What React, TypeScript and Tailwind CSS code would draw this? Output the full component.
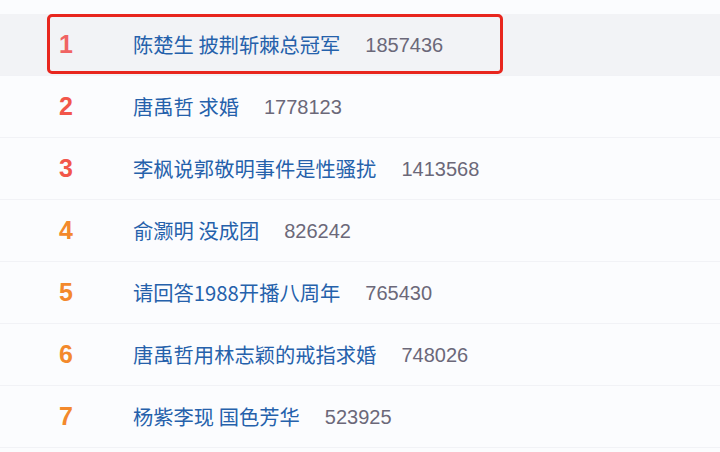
import React from "react";

const rows = [
  { rank: 1, title: "陈楚生 披荆斩棘总冠军", count: "1857436" },
  { rank: 2, title: "唐禹哲 求婚", count: "1778123" },
  { rank: 3, title: "李枫说郭敬明事件是性骚扰", count: "1413568" },
  { rank: 4, title: "俞灏明 没成团", count: "826242" },
  { rank: 5, title: "请回答1988开播八周年", count: "765430" },
  { rank: 6, title: "唐禹哲用林志颖的戒指求婚", count: "748026" },
  { rank: 7, title: "杨紫李现 国色芳华", count: "523925" },
];

export default function App() {
  return (
    <div className="w-[720px] h-[452px] overflow-hidden bg-[#fbfcfe] pt-[14px]">
      {rows.map((r) => {
        const rankColor =
          r.rank === 1
            ? "text-[#f06363]"
            : r.rank <= 3
            ? "text-[#f2564a]"
            : "text-[#f3892c]";
        return (
          <div
            key={r.rank}
            className={
              "relative flex items-center h-[62px] border-b border-[#f1f2f6] " +
              (r.rank === 1 ? "bg-[#f2f3f6]" : "")
            }
          >
            <div
              className={
                "w-[133px] pl-[58px] text-[25px] font-bold leading-none " +
                rankColor
              }
              style={{ fontFamily: '"Liberation Sans", Arial, sans-serif' }}
            >
              <span className="inline-block w-[16px] text-center">{r.rank}</span>
            </div>
            <div
              className="text-[20.3px] leading-none text-[#2561ab] whitespace-pre"
              style={{ fontFamily: '"Noto Sans CJK SC", "Noto Sans", sans-serif' }}
            >
              {r.title}
            </div>
            <div
              className="ml-[25px] text-[20px] leading-none text-[#6b6879]"
              style={{ fontFamily: '"Liberation Sans", Arial, sans-serif' }}
            >
              {r.count}
            </div>
            {r.rank === 1 && (
              <div className="absolute left-[47px] top-0 w-[456px] h-[60px] border-[3px] border-[#e8261e] rounded-[5px]" />
            )}
          </div>
        );
      })}
    </div>
  );
}
